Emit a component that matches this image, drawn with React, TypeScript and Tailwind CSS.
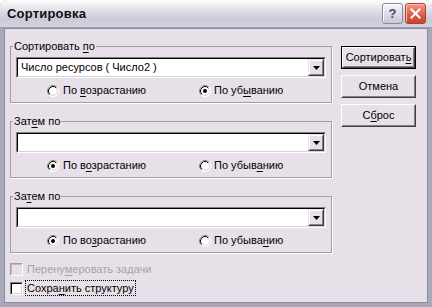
import type { ReactNode } from 'react'

const FACE = 'bg-[#e8e0e8]'

function U({ children }: { children: ReactNode }) {
  return <span className="underline underline-offset-[2px]">{children}</span>
}

function Radio({ checked }: { checked?: boolean }) {
  return (
    <svg width="12" height="12" viewBox="0 0 12 12" className="shrink-0">
      <circle cx="6" cy="6" r="5.5" fill="white" stroke="white" />
      <path d="M2.11 9.89 A5.5 5.5 0 0 1 9.89 2.11" fill="none" stroke="#808080" />
      <circle cx="6" cy="6" r="4.5" fill="white" stroke="#d8d0d8" />
      <path d="M2.82 9.18 A4.5 4.5 0 0 1 9.18 2.82" fill="none" stroke="#000" />
      {checked && <circle cx="6" cy="6" r="2" fill="#000" />}
    </svg>
  )
}

function ArrowBtn() {
  return (
    <div className="w-[16px] h-full flex border border-t-[#e8e0e8] border-l-[#e8e0e8] border-r-[#404040] border-b-[#404040]">
      <div className={`flex-1 flex items-center justify-center border border-t-white border-l-white border-r-[#808080] border-b-[#808080] ${FACE}`}>
        <svg width="7" height="4" viewBox="0 0 7 4">
          <path d="M0 0 H7 L3.5 4 Z" fill="#000" />
        </svg>
      </div>
    </div>
  )
}

function Combo({ value }: { value?: string }) {
  return (
    <div className="h-[21px] flex border border-t-[#808080] border-l-[#808080] border-r-white border-b-white">
      <div className="flex-1 flex border border-t-black border-l-black border-r-[#d8d0d8] border-b-[#d8d0d8] bg-white">
        <span className="flex-1 pl-[3px] leading-[17px] whitespace-nowrap">{value}</span>
        <div className="py-0 h-[17px]">
          <ArrowBtn />
        </div>
      </div>
    </div>
  )
}

function Group({ title, value, asc, first, second }: {
  title: ReactNode; value?: string; asc: boolean; first: ReactNode; second: ReactNode
}) {
  return (
    <fieldset className="border border-[#a0a0a0] shadow-[1px_1px_0_#fff] w-[322px] h-[63px]">
      <legend className="ml-[2px] px-[1px] leading-[13px]">{title}</legend>
      <div className="px-[5px] pt-[4px]">
        <Combo value={value} />
        <div className="flex items-center h-[13px] mt-[6px]">
          <div className="flex items-center gap-[4px] ml-[31px] w-[152px]">
            <Radio checked={asc} />
            <span className="leading-[13px]">{first}</span>
          </div>
          <div className="flex items-center gap-[3px]">
            <Radio checked={!asc} />
            <span className="leading-[13px]">{second}</span>
          </div>
        </div>
      </div>
    </fieldset>
  )
}

function Check({ disabled, children, focused }: { disabled?: boolean; children: ReactNode; focused?: boolean }) {
  return (
    <div className="flex items-center h-[14px]">
      <div className={`w-[13px] h-[13px] flex border ${disabled ? 'border-t-[#a0a0a0] border-l-[#a0a0a0] border-r-white border-b-white' : 'border-t-[#808080] border-l-[#808080] border-r-white border-b-white'}`}>
        <div className={`flex-1 border ${disabled ? `border-t-[#c0b8c0] border-l-[#c0b8c0] border-r-[#e8e0e8] border-b-[#e8e0e8] ${FACE}` : 'border-t-black border-l-black border-r-[#d8d0d8] border-b-[#d8d0d8] bg-white'}`} />
      </div>
      <span className={`ml-[3px] px-[1px] leading-[14px] ${disabled ? 'text-[#a8a0a8]' : ''} ${focused ? 'outline outline-1 outline-dotted outline-black' : ''}`}>
        {children}
      </span>
    </div>
  )
}

function Button({ children, def }: { children: ReactNode; def?: boolean }) {
  return (
    <div className={`w-[75px] h-[23px] flex ${def ? 'border border-black' : ''}`}>
      <div className="flex-1 flex border border-t-white border-l-white border-r-[#404040] border-b-[#404040]">
        <div className={`flex-1 flex items-center justify-center border border-t-[#e8e0e8] border-l-[#e8e0e8] border-r-[#808080] border-b-[#808080] ${FACE}`}>
          <span className="leading-[13px]">{children}</span>
        </div>
      </div>
    </div>
  )
}

export default function App() {
  return (
    <div className="w-[432px] h-[307px] bg-white font-['Liberation_Sans',Arial,sans-serif] text-[11px] text-black">
      <div className="w-full h-full flex flex-col rounded-t-[7px] overflow-hidden bg-[#a8a8bc]">
        {/* title bar */}
        <div className="h-[28px] flex items-center pl-[7px] pr-[6px] bg-[linear-gradient(to_bottom,#fefefe,#e6e6ee_30%,#cacad8_70%,#d4d4e0)] border-b border-[#9c9cb0]">
          <span className="font-bold text-[13px] tracking-[0.2px] text-[#101010] mt-[1px]">Сортировка</span>
          <div className="ml-auto flex gap-[2px]">
            <div className="w-[21px] h-[21px] rounded-[3px] border border-[#8a8aa0] bg-[linear-gradient(to_bottom,#f4f4f8,#c8c8d8)] flex items-center justify-center text-[#4a4a60] font-bold text-[13px] shadow-[inset_1px_1px_0_#fff]">?</div>
            <div className="w-[21px] h-[21px] rounded-[3px] border border-[#b04030] bg-[linear-gradient(to_bottom,#f49a88,#d85a44_60%,#c84632)] flex items-center justify-center shadow-[inset_1px_1px_0_#f8c0b0]">
              <svg width="11" height="11" viewBox="0 0 11 11">
                <path d="M1.5 1.5 L9.5 9.5 M9.5 1.5 L1.5 9.5" stroke="white" strokeWidth="2" strokeLinecap="square" />
              </svg>
            </div>
          </div>
        </div>
        {/* body */}
        <div className="flex-1 mx-[4px] mb-[4px] border border-[#8c8ca0] flex">
          <div className={`flex-1 flex ${FACE}`}>
            <div className="ml-[5px] pt-[11px] flex flex-col">
              <Group
                title={<>Сортировать <U>п</U>о</>}
                value="Число ресурсов ( Число2 )"
                asc={false}
                first={<>По <U>в</U>озрастанию</>}
                second={<>По уб<U>ы</U>ванию</>}
              />
              <div className="mt-[12px]">
                <Group
                  title={<>Зат<U>е</U>м по</>}
                  asc={true}
                  first={<>По в<U>о</U>зрастанию</>}
                  second={<>По убыв<U>а</U>нию</>}
                />
              </div>
              <div className="mt-[12px]">
                <Group
                  title={<>За<U>т</U>ем по</>}
                  asc={true}
                  first={<>По во<U>з</U>растанию</>}
                  second={<>По убыва<U>н</U>ию</>}
                />
              </div>
              <div className="mt-[9px]">
                <Check disabled>Перену<U>м</U>еровать задачи</Check>
              </div>
              <div className="mt-[5px]">
                <Check focused>Сохра<U>н</U>ить структуру</Check>
              </div>
            </div>
            <div className="ml-[9px] pt-[17px] flex flex-col gap-[6px]">
              <Button def>Сортироват<U>ь</U></Button>
              <Button>Отмена</Button>
              <Button>С<U>б</U>рос</Button>
            </div>
          </div>
        </div>
      </div>
    </div>
  )
}
